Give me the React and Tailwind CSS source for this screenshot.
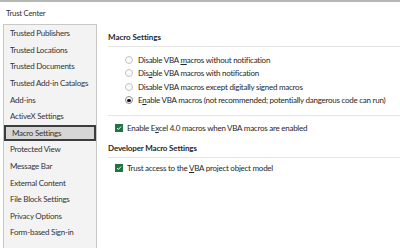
import React from "react";

const nav = [
  "Trusted Publishers",
  "Trusted Locations",
  "Trusted Documents",
  "Trusted Add-in Catalogs",
  "Add-ins",
  "ActiveX Settings",
  "Macro Settings",
  "Protected View",
  "Message Bar",
  "External Content",
  "File Block Settings",
  "Privacy Options",
  "Form-based Sign-in",
];

function Radio({ checked, children }) {
  return (
    <div className="flex h-[13.5px] items-center">
      <span
        className={
          "ml-[17px] flex h-[8px] w-[8px] items-center justify-center rounded-full border " +
          (checked ? "border-[#8a8a8a] bg-white" : "border-[#c4c4c4] bg-[#fafafa]")
        }
      >
        {checked && <span className="h-[3.5px] w-[3.5px] rounded-full bg-[#111]" />}
      </span>
      <span className="ml-[5px] whitespace-nowrap">{children}</span>
    </div>
  );
}

function Check({ children }) {
  return (
    <div className="flex h-[14px] items-center">
      <span className="ml-[7px] flex h-[8px] w-[8px] items-center justify-center bg-[#217346]">
        <svg width="6" height="6" viewBox="0 0 6 6">
          <path d="M1 3.1 L2.4 4.4 L5 1.6" stroke="white" strokeWidth="1" fill="none" />
        </svg>
      </span>
      <span className="ml-[4px] whitespace-nowrap">{children}</span>
    </div>
  );
}

export default function App() {
  return (
    <div
      className="relative h-[248px] w-[400px] overflow-hidden bg-white text-[8px] leading-[12px] tracking-[-0.25px] text-[#262626]"
      style={{ fontFamily: 'Lato, "Noto Sans", sans-serif' }}
    >
      <div className="h-[24px] border-t-2 border-[#b3b8b3]">
        <div className="pl-[6px] pt-[5px] text-[7.8px] leading-[12px] text-[#333]">Trust Center</div>
      </div>
      <div className="flex">
        <div className="ml-[3px] h-[240px] w-[94px] shrink-0 border border-[#c8c8c8] bg-[#f3f3f3]">
          {nav.map((n) => (
            <div
              key={n}
              className={
                "flex h-[16.6px] items-center whitespace-nowrap pl-[6px] text-[#333] " +
                (n === "Macro Settings" ? "border-2 border-[#3c3c3c] bg-[#d6d6d6] pl-[5px]" : "")
              }
            >
              {n}
            </div>
          ))}
        </div>
        <div className="ml-[11px] flex-1">
          <div className="pt-[7px] text-[8px] font-bold tracking-[-0.05px]">Macro Settings</div>
          <div className="mt-[3px] h-px bg-[#e6e6e6]" />
          <div className="pt-[6px]">
            <Radio>
              Disable VBA <u>m</u>acros without notification
            </Radio>
            <Radio>
              Dis<u>a</u>ble VBA macros with notification
            </Radio>
            <Radio>Disable VBA macros except digitally signed macros</Radio>
            <Radio checked>
              E<u>n</u>able VBA macros (not recommended; potentially dangerous code can run)
            </Radio>
          </div>
          <div className="mt-[8px] h-px bg-[#e6e6e6]" />
          <div className="pt-[5px]">
            <Check>
              Enable E<u>x</u>cel 4.0 macros when VBA macros are enabled
            </Check>
          </div>
          <div className="mt-[7px] text-[8px] font-bold tracking-[-0.15px]">Developer Macro Settings</div>
          <div className="mt-[3px] h-px bg-[#e6e6e6]" />
          <div className="pt-[3px]">
            <Check>
              Trust access to the <u>V</u>BA project object model
            </Check>
          </div>
        </div>
      </div>
    </div>
  );
}
